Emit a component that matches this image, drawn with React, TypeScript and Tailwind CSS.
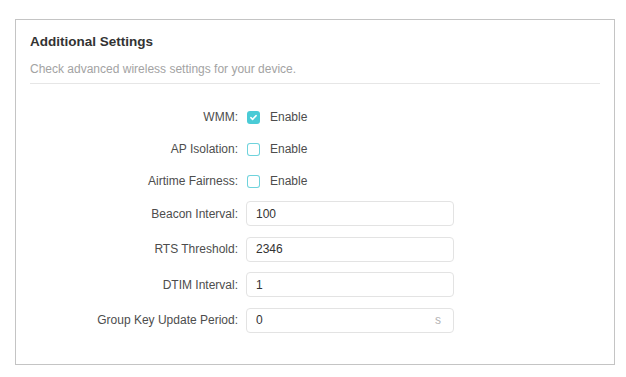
import { useState } from 'react'

// --- Checkbox row ---

function CheckRow({ label, checked }: { label: string; checked: boolean }) {
  const [on, setOn] = useState(checked)
  return (
    <div className="flex h-8 items-center">
      <div className="w-[208px] text-right text-[12px] text-[#4d4d4d]">{label}</div>
      <div
        role="checkbox"
        aria-checked={on}
        onClick={() => setOn(!on)}
        className={
          on
            ? 'ml-[9px] flex h-[13px] w-[13px] cursor-pointer items-center justify-center rounded-[3px] bg-[#4acbd6]'
            : 'ml-[9px] h-[13px] w-[13px] cursor-pointer rounded-[3px] bg-white shadow-[inset_0_0_0_1px_#6fd3dc]'
        }
      >
        {on && (
          <svg viewBox="0 0 12 12" className="h-[9px] w-[9px]" fill="none" stroke="white" strokeWidth={2} strokeLinecap="round" strokeLinejoin="round">
            <path d="M2.5 6.2l2.3 2.3L9.5 3.5" />
          </svg>
        )}
      </div>
      <span className="ml-[10px] text-[12px] text-[#4d4d4d]">Enable</span>
    </div>
  )
}

// --- Input row ---

function InputRow({ label, value, unit }: { label: string; value: string; unit?: string }) {
  return (
    <div className="flex h-[35.5px] items-center">
      <div className="w-[208px] text-right text-[12px] text-[#4d4d4d]">{label}</div>
      <div className="ml-2 flex h-[25px] w-[208px] items-center rounded-[4px] border border-[#e3e3e3] bg-white pl-[9px] pr-[12px]">
        <input
          defaultValue={value}
          className="w-full bg-transparent text-[12px] text-[#333] outline-none"
        />
        {unit && <span className="text-[12px] text-[#b3b3b3]">{unit}</span>}
      </div>
    </div>
  )
}

export default function App() {
  return (
    <div className="h-[377px] w-[626px] bg-white pl-[15px] pt-[19px] font-['Liberation_Sans',Arial,sans-serif]">
      <div className="h-[346px] w-[600px] border border-[#c4c4c4] px-[14px] pt-[14px]">
        <h2 className="text-[13.5px] leading-4 font-bold text-[#333]">Additional Settings</h2>
        <p className="mt-[11px] text-[12px] leading-4 text-[#a3a3a3]">
          Check advanced wireless settings for your device.
        </p>
        <div className="mt-[6px] h-px w-[570px] bg-[#e6e6e6]" />
        <div className="mt-[17px]">
          <CheckRow label="WMM:" checked />
          <CheckRow label="AP Isolation:" checked={false} />
          <CheckRow label="Airtime Fairness:" checked={false} />
        </div>
        <div className="-mt-[1px]">
          <InputRow label="Beacon Interval:" value="100" />
          <InputRow label="RTS Threshold:" value="2346" />
          <InputRow label="DTIM Interval:" value="1" />
          <InputRow label="Group Key Update Period:" value="0" unit="s" />
        </div>
      </div>
    </div>
  )
}
